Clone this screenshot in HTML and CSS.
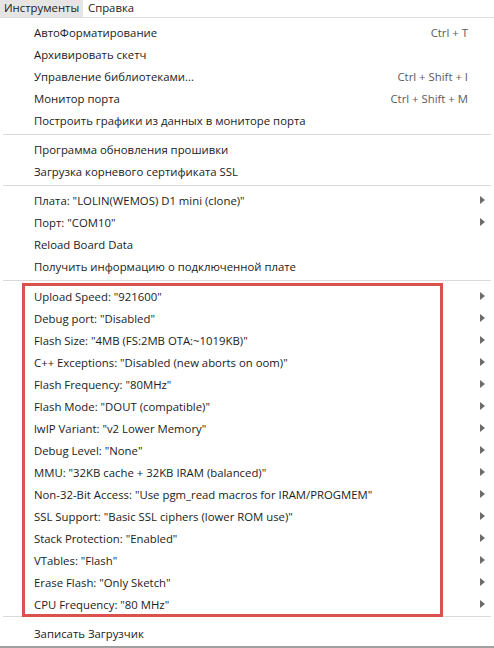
FILE: index.html
```html
<!DOCTYPE html>
<html>
<head>
<meta charset="utf-8">
<link rel="stylesheet" href="styles.css">
</head>
<body>
<div class="menubar">
  <div class="tab active">Инструменты</div>
  <div class="tab">Справка</div>
</div>
<div class="menu">
  <div class="item"><span class="label">АвтоФорматирование</span><span class="key">Ctrl + T</span></div>
  <div class="item"><span class="label">Архивировать скетч</span></div>
  <div class="item"><span class="label">Управление библиотеками...</span><span class="key">Ctrl + Shift + I</span></div>
  <div class="item"><span class="label">Монитор порта</span><span class="key">Ctrl + Shift + M</span></div>
  <div class="item"><span class="label">Построить графики из данных в мониторе порта</span></div>
  <div class="sep"></div>
  <div class="item"><span class="label">Программа обновления прошивки</span></div>
  <div class="item"><span class="label">Загрузка корневого сертификата SSL</span></div>
  <div class="sep"></div>
  <div class="item"><span class="label">Плата: "LOLIN(WEMOS) D1 mini (clone)"</span><span class="arrow"></span></div>
  <div class="item"><span class="label">Порт: "COM10"</span><span class="arrow"></span></div>
  <div class="item"><span class="label">Reload Board Data</span></div>
  <div class="item"><span class="label">Получить информацию о подключенной плате</span></div>
  <div class="sep sep-box"></div>
  <div class="group">
    <div class="highlight"></div>
    <div class="item"><span class="label">Upload Speed: "921600"</span><span class="arrow"></span></div>
    <div class="item"><span class="label">Debug port: "Disabled"</span><span class="arrow"></span></div>
    <div class="item"><span class="label">Flash Size: "4MB (FS:2MB OTA:~1019KB)"</span><span class="arrow"></span></div>
    <div class="item"><span class="label">C++ Exceptions: "Disabled (new aborts on oom)"</span><span class="arrow"></span></div>
    <div class="item"><span class="label">Flash Frequency: "80MHz"</span><span class="arrow"></span></div>
    <div class="item"><span class="label">Flash Mode: "DOUT (compatible)"</span><span class="arrow"></span></div>
    <div class="item"><span class="label">lwIP Variant: "v2 Lower Memory"</span><span class="arrow"></span></div>
    <div class="item"><span class="label">Debug Level: "None"</span><span class="arrow"></span></div>
    <div class="item"><span class="label">MMU: "32KB cache + 32KB IRAM (balanced)"</span><span class="arrow"></span></div>
    <div class="item"><span class="label">Non-32-Bit Access: "Use pgm_read macros for IRAM/PROGMEM"</span><span class="arrow"></span></div>
    <div class="item"><span class="label">SSL Support: "Basic SSL ciphers (lower ROM use)"</span><span class="arrow"></span></div>
    <div class="item"><span class="label">Stack Protection: "Enabled"</span><span class="arrow"></span></div>
    <div class="item"><span class="label">VTables: "Flash"</span><span class="arrow"></span></div>
    <div class="item"><span class="label">Erase Flash: "Only Sketch"</span><span class="arrow"></span></div>
    <div class="item"><span class="label">CPU Frequency: "80 MHz"</span><span class="arrow"></span></div>
  </div>
  <div class="sep sep-after"></div>
  <div class="item"><span class="label">Записать Загрузчик</span></div>
</div>
</body>
</html>
```

FILE: styles.css
```css
* { box-sizing: border-box; }
html, body {
  margin: 0;
  padding: 0;
  background: #ffffff;
}
body {
  width: 494px;
  height: 648px;
  overflow: hidden;
  font-family: "Open Sans", "Noto Sans", sans-serif;
  font-size: 11.35px;
  color: #1b1b1b;
}
.menubar {
  display: flex;
  height: 18px;
  border-bottom: 1px solid #dcdcdc;
}
.tab {
  height: 17px;
  line-height: 16px;
  padding: 0 4px 0 4px;
}
.tab.active {
  background: #e5e5e5;
  width: 83px;
}
.tab:not(.active) {
  padding-left: 5px;
}
.menu {
  position: relative;
  padding-top: 3px;
  height: 630px;
  border-bottom: 2px solid #a0a0a0;
}
.item {
  display: flex;
  align-items: center;
  height: 22px;
  padding-left: 34px;
  padding-right: 26px;
  white-space: nowrap;
}
.label { flex: 1; }
.key {
  color: #5a5a5a;
}
.arrow {
  width: 0;
  height: 0;
  border-top: 4px solid transparent;
  border-bottom: 4px solid transparent;
  border-left: 5px solid #6b6b6b;
  margin-right: -17px;
}
.sep {
  height: 1px;
  background: #dadada;
  margin: 3px 3px 3px 3px;
}
.sep-box {
  margin-bottom: 4px;
}
.sep-after {
  margin-top: 1px;
  margin-bottom: 5px;
}
.group {
  position: relative;
}
.highlight {
  position: absolute;
  left: 22px;
  top: -2px;
  width: 421px;
  height: 334px;
  border: 3px solid #d9534c;
  pointer-events: none;
}
```
